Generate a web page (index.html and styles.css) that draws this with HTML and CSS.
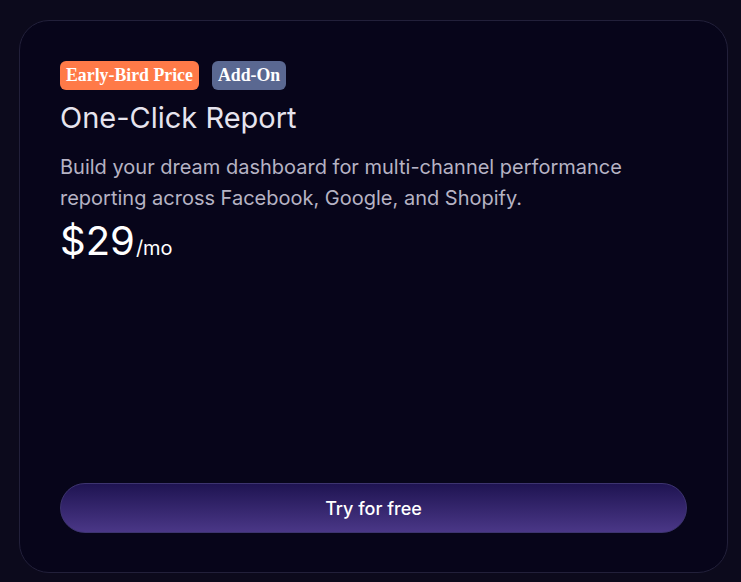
FILE: index.html
```html
<!DOCTYPE html>
<html>
<head>
<meta charset="utf-8">
<link rel="stylesheet" href="styles.css">
</head>
<body>
<div class="card">
  <div class="badges">
    <span class="badge badge-orange">Early-Bird Price</span>
    <span class="badge badge-slate">Add-On</span>
  </div>
  <h2 class="title">One-Click Report</h2>
  <p class="desc">Build your dream dashboard for multi-channel performance reporting across Facebook, Google, and Shopify.</p>
  <div class="price"><span class="amount">$29</span><span class="per">/mo</span></div>
  <div class="spacer"></div>
  <button class="cta">Try for free</button>
</div>
</body>
</html>
```
FILE: styles.css
```css
html, body {
  margin: 0;
  background: #0c0a1c;
}
body {
  padding: 20px 13px 9px 19px;
  font-family: "Inter", "Liberation Sans", sans-serif;
}
.card {
  box-sizing: border-box;
  height: 553px;
  border: 1px solid #22203a;
  border-radius: 30px;
  background: #07051a;
  padding: 40px 40px 40px 40px;
  display: flex;
  flex-direction: column;
}
.badges {
  display: flex;
  gap: 13px;
}
.badge {
  font-family: "Liberation Serif", serif;
  font-weight: bold;
  font-size: 17.8px;
  color: #fff;
  height: 29px;
  line-height: 29px;
  padding: 0 6px;
  border-radius: 6px;
}
.badge-orange { background: #ff7a48; }
.badge-slate { background: #5a6891; }
.title {
  margin: 10px 0 0 0;
  font-size: 29px;
  font-weight: 400;
  line-height: 36px;
  color: #e6e4ee;
}
.desc {
  margin: 16px 0 0 0;
  font-size: 20px;
  line-height: 31px;
  color: #b6b3c4;
}
.price {
  margin-top: 3px;
  display: flex;
  align-items: baseline;
  color: #fff;
}
.amount {
  font-size: 40px;
  line-height: 48px;
}
.per {
  font-size: 20px;
  margin-left: 1px;
}
.spacer { flex: 1; }
.cta {
  height: 50px;
  margin-bottom: -1px;
  border-radius: 25px;
  border: 1px solid #3d3470;
  background: linear-gradient(to bottom, #1f1452, #4a3787);
  color: #fff;
  font-family: "Inter", "Liberation Sans", sans-serif;
  font-size: 18px;
  font-weight: 500;
}
```
